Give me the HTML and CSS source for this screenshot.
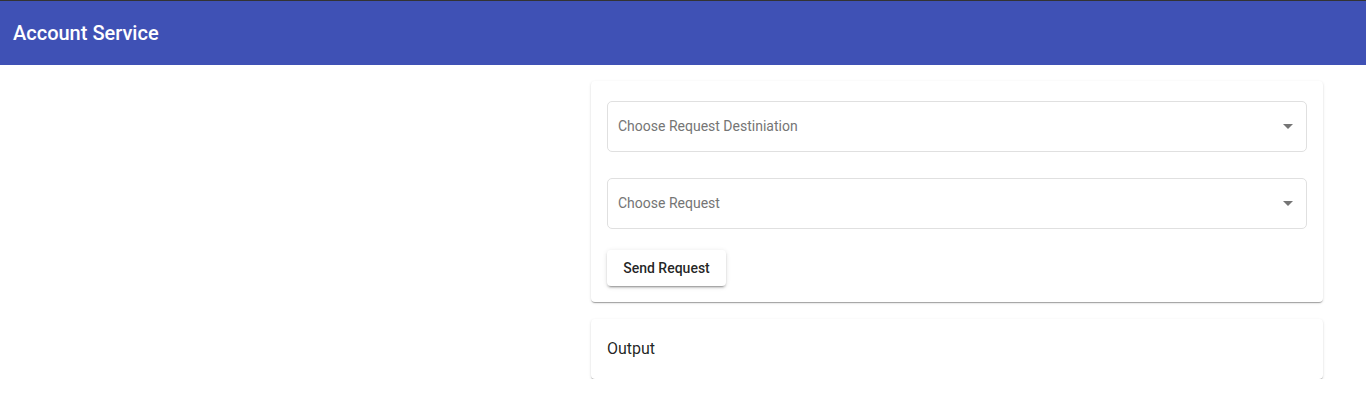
FILE: index.html
```html
<!DOCTYPE html>
<html lang="en">
<head>
<meta charset="utf-8">
<title>Account Service</title>
<link rel="stylesheet" href="styles.css">
</head>
<body>
<header class="toolbar">
  <span class="title">Account Service</span>
</header>
<main class="layout">
  <div class="spacer"></div>
  <div class="column">
    <section class="card form-card">
      <div class="field">
        <div class="select">
          <span class="placeholder">Choose Request Destiniation</span>
          <span class="arrow"></span>
        </div>
      </div>
      <div class="field">
        <div class="select">
          <span class="placeholder">Choose Request</span>
          <span class="arrow"></span>
        </div>
      </div>
      <button class="raised-btn" type="button">Send Request</button>
    </section>
    <section class="card output-card">
      <span class="output-title">Output</span>
    </section>
  </div>
</main>
</body>
</html>
```
FILE: styles.css
```css
* { box-sizing: border-box; }
html, body { margin: 0; padding: 0; background: #fff; }
body { font-family: Roboto, "Helvetica Neue", Arial, sans-serif; color: rgba(0,0,0,.87); }

.toolbar {
  height: 65px;
  border-top: 1px solid #333;
  background: #3f51b5;
  color: #fff;
  display: flex;
  align-items: center;
  padding: 0 13px;
}
.title { font-size: 20px; font-weight: 500; letter-spacing: 0; }

.layout {
  display: grid;
  grid-template-columns: 591px 732px;
  padding-top: 16px;
}
.column { display: flex; flex-direction: column; gap: 17px; }

.card {
  background: #fff;
  border-radius: 4px;
  box-shadow: 0 2px 1px -1px rgba(0,0,0,.2), 0 1px 1px 0 rgba(0,0,0,.14), 0 1px 3px 0 rgba(0,0,0,.12);
}
.form-card {
  padding: 20px 16px 16px;
  display: flex;
  flex-direction: column;
  align-items: flex-start;
}
.field { width: 700px; padding-bottom: 26px; }
.select {
  height: 51px;
  border: 1px solid #e0e0e0;
  border-radius: 5px;
  display: flex;
  align-items: center;
  padding: 0 13px 2px 10px;
}
.placeholder { flex: 1; font-size: 14px; color: #757575; }
.arrow {
  width: 0; height: 0;
  border-left: 5px solid transparent;
  border-right: 5px solid transparent;
  border-top: 5px solid #757575;
  margin-top: 2px;
}
.raised-btn {
  margin-top: -5px;
  height: 36px;
  width: 119px;
  border: none;
  border-radius: 4px;
  background: #fff;
  font-family: Roboto, Arial, sans-serif;
  font-size: 14px;
  font-weight: 500;
  color: rgba(0,0,0,.87);
  box-shadow: 0 3px 1px -2px rgba(0,0,0,.2), 0 2px 2px 0 rgba(0,0,0,.14), 0 1px 5px 0 rgba(0,0,0,.12);
  padding: 0 16px;
}
.output-card {
  height: 60px;
  display: flex;
  align-items: center;
  padding: 0 16px 2px;
}
.output-title { font-size: 16px; }
```
